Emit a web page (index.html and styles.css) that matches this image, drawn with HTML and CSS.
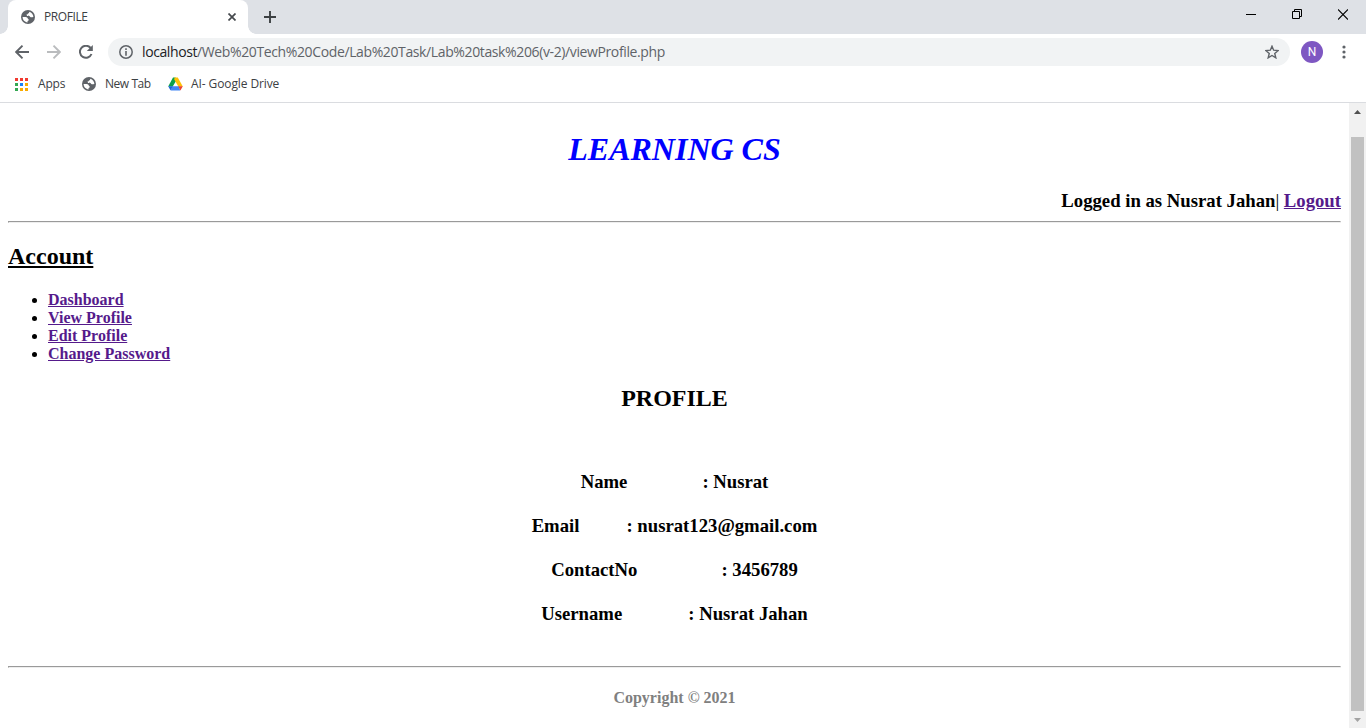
FILE: index.html
```html
<!DOCTYPE html>
<html lang="en">
<head>
<meta charset="utf-8">
<title>PROFILE</title>
<link rel="stylesheet" href="styles.css">
</head>
<body>
<svg width="0" height="0" class="defs">
  <symbol id="globe" viewBox="0 0 14 14">
    <circle cx="7" cy="7" r="7" fill="#5f6368"/>
    <path d="M8.300 1.700C8.300 3.300 7 3.100 6.800 3.800c-.2.800-1.300.5-1.300 1.300 0 .9 2.700.3 3.200 1.100.5.700.7 1 1.700 1 .8 0 1.100-.4 2-.3C12.300 4.500 10.700 2.400 8.300 1.700zM1.600 7.100c1.700-.2 4.900-.3 5.200 1.300.1.800 1.200.5 1 1.500-.2.900-1.300.7-1.300 1.500v1C3.800 12.300 1.600 10 1.600 7.100z" fill="#fff"/>
  </symbol>
</svg>
<div class="window">
  <header class="tabstrip">
    <div class="tab">
      <svg class="favicon" width="14" height="14"><use href="#globe"/></svg>
      <span class="tab-title">PROFILE</span>
      <svg class="tab-close" width="8" height="8" viewBox="0 0 8 8"><path d="M.5.500l7 7M7.500.500l-7 7" stroke="#45494d" stroke-width="1.700"/></svg>
    </div>
    <svg class="new-tab" width="12" height="12" viewBox="0 0 12 12"><path d="M6 0v12M0 6h12" stroke="#3c4043" stroke-width="1.900"/></svg>
    <div class="controls">
      <svg width="10" height="11" viewBox="0 0 10 11"><path d="M0 5.500h10" stroke="#000"/></svg>
      <svg width="10" height="11" viewBox="0 0 10 11"><path d="M.5 2.500h7v7h-7zM2.500 2.500v-2h7v7h-2" fill="none" stroke="#000"/></svg>
      <svg width="10" height="11" viewBox="0 0 10 11"><path d="M0 .5l10 10M10 .5l-10 10" stroke="#000" stroke-width="1.100"/></svg>
    </div>
  </header>
  <div class="toolbar">
    <svg class="back" width="14" height="14" viewBox="0 0 14 14"><path d="M14 7H1.500M7.500.700 1.200 7l6.300 6.300" fill="none" stroke="#5f6368" stroke-width="1.900"/></svg>
    <svg class="forward" width="14" height="14" viewBox="0 0 14 14"><path d="M0 7h12.500M6.500.700 12.800 7l-6.300 6.300" fill="none" stroke="#babcbe" stroke-width="1.900"/></svg>
    <svg class="reload" width="14" height="14" viewBox="0 0 14 14"><path d="M12.500 9A6 6 0 1 1 11.600 3" fill="none" stroke="#5f6368" stroke-width="2"/><path d="M13.800 0v6H7.800z" fill="#5f6368"/></svg>
    <div class="omnibox">
      <svg width="14" height="14" viewBox="0 0 14 14"><circle cx="7" cy="7" r="6.200" fill="none" stroke="#5f6368" stroke-width="1.500"/><path d="M7 3.300v1.600M7 6v4.700" stroke="#5f6368" stroke-width="1.600"/></svg>
      <span class="url"><span class="host">localhost</span><span class="path">/Web%20Tech%20Code/Lab%20Task/Lab%20task%206(v-2)/viewProfile.php</span></span>
      <svg class="star" width="14" height="14" viewBox="0 0 14 14"><path d="M7 1.200l1.650 4 4.550.35-3.450 2.900 1.050 4.350L7 10.450 3.200 12.800l1.050-4.350L.8 5.550l4.550-.35z" fill="none" stroke="#5f6368" stroke-width="1.400"/></svg>
    </div>
    <span class="avatar">N</span>
    <svg class="menu" width="4" height="14" viewBox="0 0 4 14" fill="#5f6368"><circle cx="2" cy="2" r="1.600"/><circle cx="2" cy="7" r="1.600"/><circle cx="2" cy="12" r="1.600"/></svg>
  </div>
  <nav class="bookmarks">
    <svg class="apps" width="13" height="13" viewBox="0 0 13 13"><path fill="#f13a30" d="M0 0h3v3H0zM5 0h3v3H5zM10 0h3v3h-3z"/><path fill="#34a853" d="M0 5h3v3H0zM0 10h3v3H0z"/><path fill="#1a82f7" d="M5 5h3v3H5z"/><path fill="#f9ab00" d="M10 5h3v3h-3zM5 10h3v3H5zM10 10h3v3h-3z"/></svg>
    <span class="bm-apps">Apps</span>
    <svg class="bm-globe" width="14" height="14"><use href="#globe"/></svg>
    <span class="bm-new">New Tab</span>
    <svg class="drive" width="15" height="14" viewBox="0 0 15 14"><path d="M5 .5h2.500l1.300 2.300-4.100 6.700H.2z" fill="#0da04b"/><path d="M6.500.500h3.300l5 9h-4.500L6.300 2.600z" fill="#ffc107"/><path d="M3.900 9.300h6.900l1.400 4.200H2.800z" fill="#4285f4"/><path d="M.2 9.300h4.500L2.600 13.400z" fill="#1a66d6"/><path d="M10.300 9.300h4.500l-2.400 4.100z" fill="#ea4335"/></svg>
    <span class="bm-drive">AI- Google Drive</span>
  </nav>
  <div class="viewport">
    <main class="page">
      <h1>LEARNING CS</h1>
      <div class="login"><b>Logged in as Nusrat Jahan</b>| <a>Logout</a></div>
      <hr>
      <h2 class="account">Account</h2>
      <ul>
        <li><a>Dashboard</a></li>
        <li><a>View Profile</a></li>
        <li><a>Edit Profile</a></li>
        <li><a>Change Password</a></li>
      </ul>
      <h2 class="heading">PROFILE</h2>
      <section class="details">
        <p><span class="label gap-name">Name</span>: Nusrat</p>
        <p><span class="label gap-email">Email</span>: nusrat123@gmail.com</p>
        <p><span class="label gap-contact">ContactNo</span>: 3456789</p>
        <p><span class="label gap-user">Username</span>: Nusrat Jahan</p>
      </section>
      <hr>
      <footer>Copyright © 2021</footer>
    </main>
    <aside class="scrollbar">
      <svg width="7" height="4" viewBox="0 0 7 4"><path d="M0 4 3.500 0 7 4z" fill="#505050"/></svg>
      <div class="thumb"></div>
      <svg width="7" height="4" viewBox="0 0 7 4"><path d="M0 0h7L3.500 4z" fill="#a3a3a3"/></svg>
    </aside>
  </div>
</div>
</body>
</html>
```
FILE: styles.css
```css
* { box-sizing: border-box; }
body { margin: 0; overflow: hidden; background: #fff; }
svg { display: block; flex: none; }
.defs { position: absolute; }
.window { display: flex; flex-direction: column; width: 1366px; height: 728px; font: 12px "Open Sans", sans-serif; color: #3c4043; }

.tabstrip { display: flex; height: 34px; background: #dee1e6; }
.tab { display: flex; align-items: center; position: relative; width: 240px; height: 34px; margin-left: 8px; padding: 0 12px 0 13px; background: #fff; border-radius: 8px 8px 0 0; }
.tab::before, .tab::after { content: ""; position: absolute; bottom: 0; width: 8px; height: 8px; }
.tab::before { left: -8px; background: radial-gradient(circle at 0 0, transparent 7.500px, #fff 8px); }
.tab::after { right: -8px; background: radial-gradient(circle at 100% 0, transparent 7.500px, #fff 8px); }
.tab-title { margin-left: 9px; padding-bottom: 1px; letter-spacing: -0.4px; }
.tab-close { margin-left: auto; }
.new-tab { margin: 11px 0 0 16px; }
.controls { display: flex; gap: 36px; margin: 9px 18px 0 auto; }

.toolbar { display: flex; align-items: center; height: 36px; padding-left: 15px; }
.forward { margin-left: 18px; }
.reload { margin-left: 18px; }
.omnibox { display: flex; align-items: center; width: 1182px; height: 28px; margin-left: 15px; padding: 0 11px; border-radius: 14px; background: #f1f3f4; }
.url { margin-left: 9px; padding-bottom: 1px; font-size: 14px; white-space: nowrap; color: #5f6368; }
.host { color: #202124; letter-spacing: -0.4px; }
.path { letter-spacing: -0.38px; }
.star { margin-left: auto; }
.avatar { width: 22px; height: 22px; margin-left: 11px; border-radius: 50%; background: #7e57c2; color: #fff; text-align: center; font: 12px/22px Roboto, sans-serif; }
.menu { margin-left: 19px; }

.bookmarks { display: flex; align-items: center; height: 33px; padding: 0 0 4px 15px; border-bottom: 1px solid #dadce0; white-space: nowrap; }
.bookmarks span { padding-bottom: 1px; }
.bm-apps { width: 28px; margin-left: 10px; letter-spacing: -0.2px; }
.bm-globe { margin-left: 16px; }
.bm-new { width: 46px; margin-left: 9px; letter-spacing: -0.45px; }
.drive { margin-left: 17px; }
.bm-drive { margin-left: 8px; letter-spacing: -0.1px; }

.viewport { display: flex; flex: 1; min-height: 0; }
.page { width: 1349px; padding: 0 8px; font: bold 16px/18px "Liberation Serif", "Times New Roman", serif; color: #000; }
h1 { margin: 28px 0 22px; font-size: 32px; line-height: 37px; font-style: italic; text-align: center; color: #00f; }
.login { height: 22px; font-size: 18.720px; line-height: 22px; font-weight: normal; text-align: right; }
.login a { font-weight: bold; }
.page a { color: #551a8b; text-decoration: underline; }
hr { margin: 9px 0 0; border: 1px inset #eee; }
h2 { margin: 0; font-size: 24px; line-height: 27px; }
.account { margin-top: 20px; text-decoration: underline; }
ul { margin: 21px 0 22px; padding-left: 40px; }
.heading { text-align: center; }
.details { margin: 59px 0 41px; font-size: 18.720px; line-height: 22px; text-align: center; }
.details p { margin: 0 0 22px; }
.label { display: inline-block; text-align: left; }
.gap-name { margin-right: 75px; }
.gap-email { margin-right: 47px; }
.gap-contact { margin-right: 84px; }
.gap-user { margin-right: 66px; }
footer { margin-top: 21px; text-align: center; color: #808080; }

.scrollbar { display: flex; flex-direction: column; align-items: center; width: 17px; padding: 7px 0 6px; background: #f1f1f1; }
.thumb { width: 13px; height: 574px; margin: 23px 0 7px; background: #c1c1c1; }
```
